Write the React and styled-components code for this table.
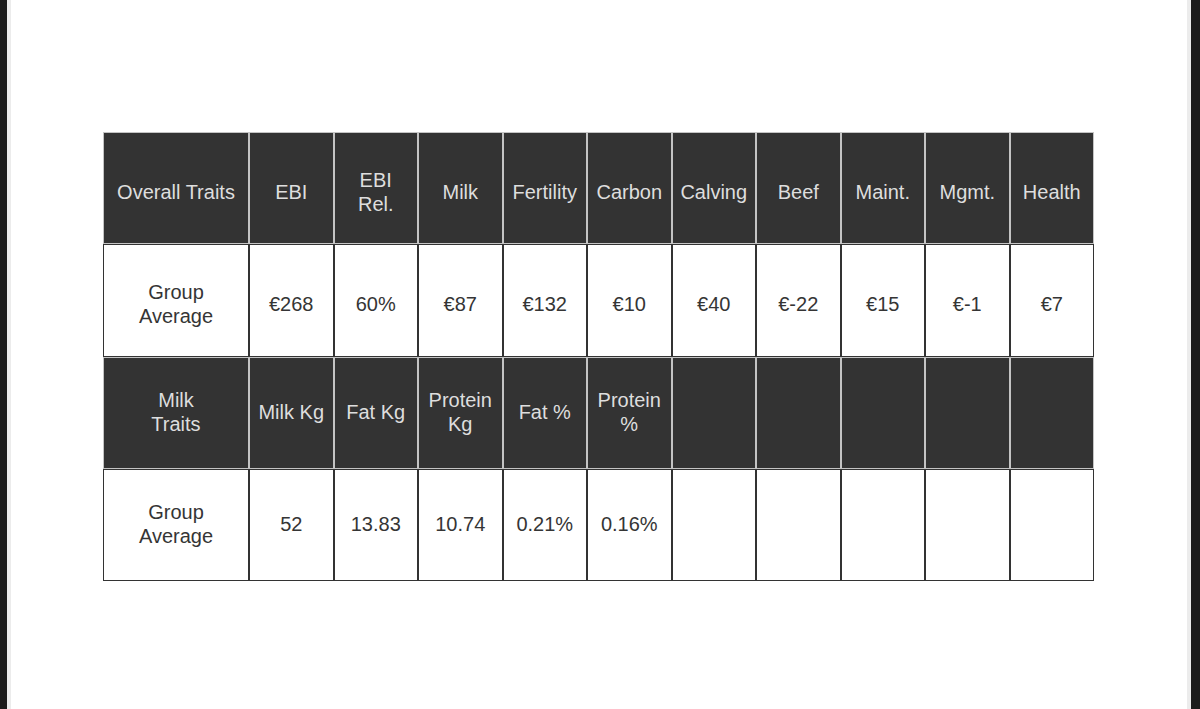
import React from "react";
import styled, { createGlobalStyle } from "styled-components";

const Global = createGlobalStyle`
  html, body { margin: 0; padding: 0; background: #fff; }
  body { font-family: "Liberation Sans", Arial, sans-serif; }
  #root { height: 709px; }
`;

const Screen = styled.div`
  display: flex;
  width: 1200px;
  height: 709px;
  overflow: hidden;
`;

const SideBar = styled.div`
  flex: 0 0 ${(p) => p.$w}px;
  background: #1c1c1c;
`;

const Page = styled.div`
  flex: 1;
  background: #fff;
  border-left: 4px solid #ececec;
  border-right: 4px solid #ececec;
  padding: 132px 0 0 92px;
  box-sizing: border-box;
`;

const Grid = styled.div`
  display: grid;
  grid-template-columns: 146px repeat(10, 84.5px);
  grid-auto-rows: 112.25px;
  width: 991px;
`;

const Cell = styled.div`
  box-sizing: border-box;
  display: flex;
  align-items: center;
  justify-content: center;
  text-align: center;
  font-size: 20px;
  line-height: 23.5px;
  padding: ${(p) => (p.$low ? "9px 1px 0" : "0 1px")};
  white-space: pre-line;
  background: ${(p) => (p.$dark ? "#333333" : "#ffffff")};
  color: ${(p) => (p.$dark ? "#dedede" : "#353535")};
  border: 1px solid ${(p) => (p.$dark ? "#c4c4c4" : "#333333")};
`;

const rows = [
  {
    dark: true,
    low: true,
    cells: ["Overall Traits", "EBI", "EBI\nRel.", "Milk", "Fertility", "Carbon", "Calving", "Beef", "Maint.", "Mgmt.", "Health"],
  },
  {
    dark: false,
    low: true,
    cells: ["Group\nAverage", "€268", "60%", "€87", "€132", "€10", "€40", "€-22", "€15", "€-1", "€7"],
  },
  {
    dark: true,
    low: false,
    cells: ["Milk\nTraits", "Milk Kg", "Fat Kg", "Protein\nKg", "Fat %", "Protein\n%", "", "", "", "", ""],
  },
  {
    dark: false,
    low: false,
    cells: ["Group\nAverage", "52", "13.83", "10.74", "0.21%", "0.16%", "", "", "", "", ""],
  },
];

export default function App() {
  return (
    <>
      <Global />
      <Screen>
        <SideBar $w={7} />
        <Page>
          <Grid>
            {rows.map((r, ri) =>
              r.cells.map((c, ci) => (
                <Cell key={`${ri}-${ci}`} $dark={r.dark} $low={r.low}>
                  {c}
                </Cell>
              ))
            )}
          </Grid>
        </Page>
        <SideBar $w={9} />
      </Screen>
    </>
  );
}
